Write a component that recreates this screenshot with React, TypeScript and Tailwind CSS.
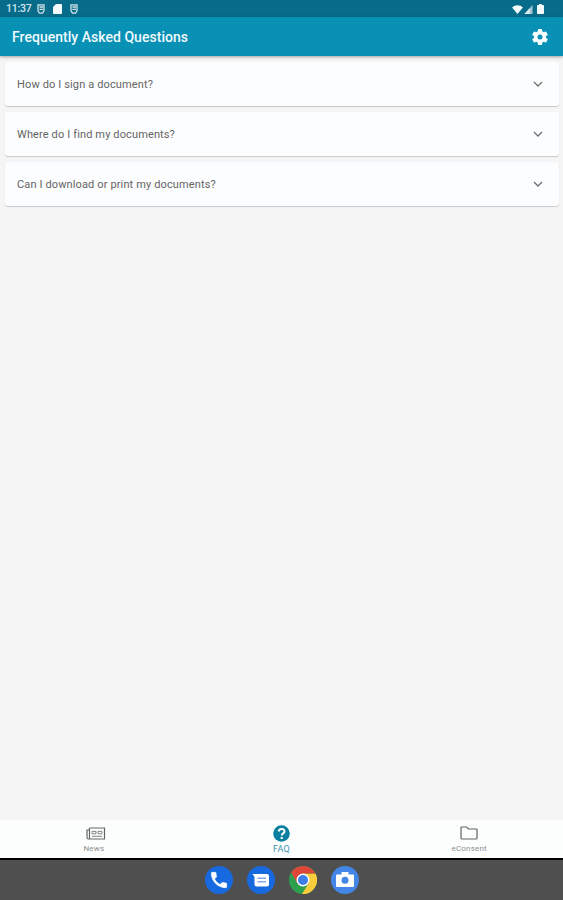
import React, { useState } from 'react';
import clsx from 'clsx';

const questions = [
  'How do I sign a document?',
  'Where do I find my documents?',
  'Can I download or print my documents?',
];

const BadgeIcon: React.FC = () => (
  <svg width="8" height="10" viewBox="0 0 8 10" fill="none" stroke="#cfe3e9" strokeWidth="1.3">
    <path d="M1 .8h6v6L5.500 9.200h-3L1 6.800z" />
    <path d="M2.500 3h3.500M2.500 5.300h3.500" />
  </svg>
);

const StatusBar: React.FC = () => (
  <div className="flex h-[17px] items-center justify-between bg-[#076c8a] pt-px pr-[19px] pl-[6px]">
    <div className="flex items-center">
      <span className="w-[31px] text-[10.5px] leading-none font-medium tracking-[-0.2px] text-[#d5e8ed]">11:37</span>
      <BadgeIcon />
      <svg className="mr-[8px] ml-[8px]" width="9" height="10" viewBox="0 0 9 10" fill="#f4fbfd">
        <path d="M3 0h5a1 1 0 0 1 1 1v8a1 1 0 0 1-1 1H1a1 1 0 0 1-1-1V3z" />
      </svg>
      <BadgeIcon />
    </div>
    <div className="flex items-center">
      <svg width="11" height="9" viewBox="0 0 12 10" fill="#f4fbfd">
        <path d="M0 2.800C3.400-.5 8.600-.5 12 2.800L6 10z" />
      </svg>
      <svg className="ml-px" width="9" height="9" viewBox="0 0 9 10">
        <path d="M9 0v10H0z" fill="#9cc4d0" />
        <path d="M6 3.300V10H0z" fill="#d8eaef" />
      </svg>
      <svg className="ml-[4px]" width="7" height="10" viewBox="0 0 6 10" preserveAspectRatio="none" fill="#f4fbfd">
        <path d="M1.800 0h2.400v1h1a.8.8 0 0 1 .8.800v7.400a.8.800 0 0 1-.8.800H.800a.8.800 0 0 1-.8-.8V1.800A.8.800 0 0 1 .800 1h1z" />
      </svg>
    </div>
  </div>
);

const Header: React.FC = () => (
  <header className="z-10 flex h-[39px] items-center justify-between bg-[#0890b5] pt-px pr-[13px] pl-3 shadow-[0_1px_3px_rgba(0,0,0,0.35)]">
    <h1 className="text-[14px] leading-none font-medium tracking-[0.03px] text-[#f1fafc]">Frequently Asked Questions</h1>
    <button type="button" aria-label="Settings">
      <svg width="20" height="20" viewBox="0 0 24 24" fill="#f8fdfe">
        <path d="M19.14 12.94c.04-.3.06-.61.06-.94s-.02-.64-.07-.94l2.03-1.58a.49.49 0 0 0 .12-.61l-1.92-3.32a.49.49 0 0 0-.59-.22l-2.39.96a7 7 0 0 0-1.62-.94l-.36-2.54a.48.48 0 0 0-.48-.41h-3.84a.47.47 0 0 0-.47.41l-.36 2.54c-.59.24-1.13.57-1.62.94l-2.39-.96a.48.48 0 0 0-.59.22L2.74 8.87a.47.47 0 0 0 .12.61l2.03 1.58a6 6 0 0 0 0 1.88l-2.03 1.58a.49.49 0 0 0-.12.61l1.92 3.32c.12.22.37.29.59.22l2.39-.96c.5.38 1.03.7 1.62.94l.36 2.54c.05.24.24.41.48.41h3.84c.24 0 .44-.17.47-.41l.36-2.54c.59-.24 1.13-.56 1.62-.94l2.39.96c.22.08.47 0 .59-.22l1.92-3.32a.47.47 0 0 0-.12-.61zM12 15a3 3 0 1 1 0-6 3 3 0 0 1 0 6z" />
      </svg>
    </button>
  </header>
);

const QuestionCard: React.FC<{ title: string }> = ({ title }) => (
  <button
    type="button"
    className="flex h-[44px] w-full items-center justify-between rounded-[3px] bg-[#fcfdfe] pr-[16px] pl-3 text-left shadow-[0_1px_1px_rgba(0,0,0,0.18)]"
  >
    <span className="pt-px text-[11px] leading-none tracking-[0.13px] text-[#646464]">{title}</span>
    <svg className="mb-px" width="10" height="6" viewBox="0 0 10 6" fill="none" stroke="#6e6e6e" strokeWidth="1.3">
      <path d="M1 1l4 4 4-4" />
    </svg>
  </button>
);

const NewsIcon: React.FC = () => (
  <svg width="20" height="13" viewBox="0 0 20 13" fill="none" stroke="#646464" strokeWidth="1.2">
    <path d="M3.500 1h15v11h-16A1.500 1.500 0 0 1 1 10.500V3h2.500M3.500 1v9.500a1.200 1.200 0 0 1-1 1.500" />
    <path d="M6 4.400h4v2.400H6zM12 4.400h4v2.400h-4zM6 9.300h10" stroke="#848484" strokeWidth="1" />
  </svg>
);

const FaqIcon: React.FC = () => (
  <svg width="17" height="17" viewBox="0 0 17 17" fill="none">
    <circle cx="8.5" cy="8.5" r="8.300" fill="#087f9f" />
    <path d="M5.700 6.500c.2-3.400 5.800-3.400 5.800-.1 0 2-2.700 2-2.700 4" stroke="#fff" strokeWidth="2" />
    <circle cx="8.700" cy="12.900" r="1.200" fill="#fff" />
  </svg>
);

const FolderIcon: React.FC = () => (
  <svg width="18" height="14" viewBox="0 0 18 14" fill="none" stroke="#626262" strokeWidth="1.2">
    <path d="M1.800 1h4.700l2 2h7.700c.5 0 .8.300.8.800v8.400c0 .5-.3.800-.8.800H1.800a.8.800 0 0 1-.8-.8V1.800c0-.5.3-.8.8-.8z" />
  </svg>
);

const tabs = [
  { label: 'News', icon: <NewsIcon />, offset: 'ml-1' },
  { label: 'FAQ', icon: <FaqIcon />, offset: '' },
  { label: 'eConsent', icon: <FolderIcon />, offset: '' },
];

const BottomNav: React.FC = () => {
  const [active, setActive] = useState(1);

  return (
    <nav className="grid h-[38px] grid-cols-3 bg-[#fcfefe]">
      {tabs.map((tab, index) => (
        <button
          key={tab.label}
          type="button"
          onClick={() => setActive(index)}
          className="flex flex-col items-center pt-[4px]"
        >
          <span className={clsx('flex h-[18px] items-center', tab.offset)}>{tab.icon}</span>
          <span
            className={clsx(
              'mt-[2px] leading-[10px]',
              index === active ? 'text-[9px] tracking-[0.2px] text-[#3b93ab]' : 'text-[8px] tracking-[0.2px] text-[#8f8f8f]'
            )}
          >
            {tab.label}
          </span>
        </button>
      ))}
    </nav>
  );
};

const Dock: React.FC = () => (
  <div className="flex h-[42px] items-center justify-center gap-[14px] border-t-2 border-black bg-[#4f4f50] pb-px">
    {/* Phone */}
    <svg width="28" height="28" viewBox="0 0 28 28">
      <circle cx="14" cy="14" r="14" fill="#1769e0" />
      <path
        transform="translate(3.8 3.8) scale(.85)"
        fill="#fff"
        stroke="#fff"
        strokeWidth=".8"
        d="M6.62 10.79a15.15 15.15 0 0 0 6.59 6.59l2.2-2.2a1 1 0 0 1 1.02-.24c1.12.37 2.33.57 3.57.57a1 1 0 0 1 1 1V20a1 1 0 0 1-1 1C10.610 21 3 13.390 3 4a1 1 0 0 1 1-1h3.500a1 1 0 0 1 1 1c0 1.250.2 2.450.57 3.570a1 1 0 0 1-.25 1.020z"
      />
    </svg>
    {/* Messages */}
    <svg width="28" height="28" viewBox="0 0 28 28">
      <circle cx="14" cy="14" r="14" fill="#1769e0" />
      <path d="M5.500 8H20a2 2 0 0 1 2 2v8.500a2 2 0 0 1-2 2H9.500a2 2 0 0 1-2-2v-7.500z" fill="#fff" />
      <path d="M10.500 12.200h8.500M10.500 15.800h8.500" stroke="#84aaf0" strokeWidth="1.500" />
    </svg>
    {/* Chrome */}
    <svg width="28" height="28" viewBox="0 0 28 28">
      <circle cx="14" cy="14" r="14" fill="#2da04f" />
      <path d="M14 14V7.500h12.400A14 14 0 0 1 13 28l6.600-10.800z" fill="#fbcd3c" />
      <path d="M14 7.500h12.400A14 14 0 0 0 2.200 6.500l6.200 10.700z" fill="#dd4638" />
      <circle cx="14" cy="14" r="6.500" fill="#fff" />
      <circle cx="14" cy="14" r="5" fill="#3e7ee8" />
    </svg>
    {/* Camera */}
    <svg width="28" height="28" viewBox="0 0 28 28">
      <circle cx="14" cy="14" r="14" fill="#4485e8" />
      <path d="M10.500 6h7v2.500H22a1 1 0 0 1 1 1V20a1 1 0 0 1-1 1H6a1 1 0 0 1-1-1V9.500a1 1 0 0 1 1-1h4.500z" fill="#fff" />
      <circle cx="14" cy="14.2" r="3.5" fill="#4485e8" />
    </svg>
  </div>
);

const App: React.FC = () => {
  return (
    <div className="flex h-[900px] w-full flex-col overflow-hidden bg-[#f5f5f5] font-['Roboto',sans-serif]">
      <StatusBar />
      <Header />
      <main className="flex flex-1 flex-col gap-[6px] pt-[6px] pr-1 pl-[5px]">
        {questions.map((question) => (
          <QuestionCard key={question} title={question} />
        ))}
      </main>
      <BottomNav />
      <Dock />
    </div>
  );
};

export default App;
